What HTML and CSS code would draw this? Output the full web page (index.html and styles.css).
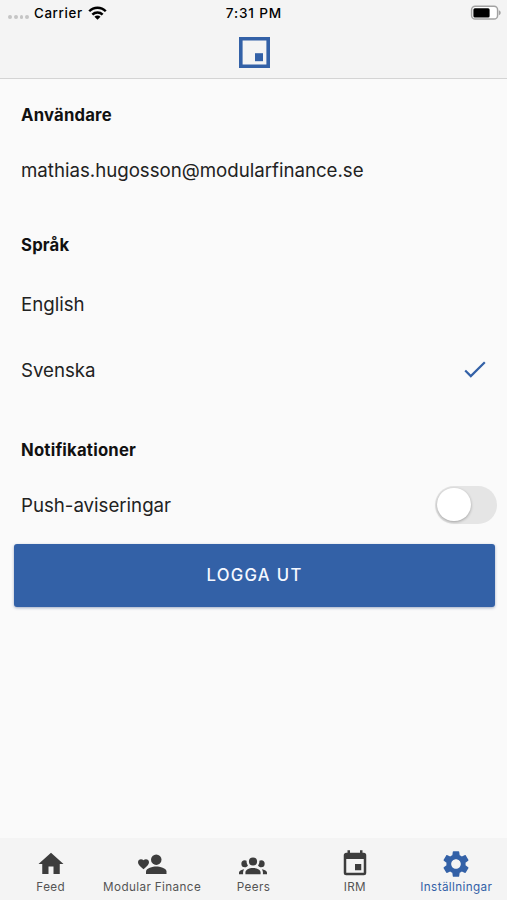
FILE: index.html
```html
<!DOCTYPE html>
<html lang="sv">
<head>
<meta charset="utf-8">
<title>Inställningar</title>
<link rel="stylesheet" href="styles.css">
</head>
<body>
<div class="app">
  <header class="header">
    <div class="status">
      <div class="status-left">
        <span class="dots"><i></i><i></i><i></i><i></i></span>
        <span class="carrier">Carrier</span>
        <svg class="wifi" viewBox="0 0 20 15"><g fill="none" stroke="#000" stroke-width="2.6"><path d="M1.3 5.4C6.1.5 13.9.5 18.7 5.4"/><path d="M4.6 8.9c3-3 7.8-3 10.8 0"/></g><path d="M6.800 11.100c1.800-1.700 4.600-1.700 6.400 0L10 14.400z"/></svg>
      </div>
      <span class="time">7:31 PM</span>
      <div class="status-right">
        <svg class="battery" viewBox="0 0 31 16"><rect x="1.600" y="1.300" width="26" height="12.800" rx="3.600" fill="#fff" stroke="#a2a2a2" stroke-width="1.500"/><rect x="3.400" y="3.200" width="16.200" height="9.200" rx="1.500"/><path d="M28.900 5.200c2.400 1 2.400 4 0 5z" fill="#a2a2a2"/></svg>
      </div>
    </div>
    <svg class="logo" viewBox="0 0 31 31" fill="#3361a7"><path fill-rule="evenodd" d="M0 0h31v31H0zM3.600 3.600v23.800h23.800V3.600z"/><path d="M16 16.200h8v8h-8z"/></svg>
  </header>
  <main class="content">
    <h2 class="heading">Användare</h2>
    <div class="row row-user"><span class="email">mathias.hugosson@modularfinance.se</span></div>
    <h2 class="heading heading-lang">Språk</h2>
    <div class="row row-lang"><span>English</span></div>
    <div class="row row-lang"><span>Svenska</span>
      <svg class="check" viewBox="0 0 22 17"><path d="M1.200 9.500l5.600 5.600L20.800 1.200" fill="none" stroke="#3361a7" stroke-width="2.200"/></svg>
    </div>
    <h2 class="heading heading-notif">Notifikationer</h2>
    <div class="row row-push"><span>Push-aviseringar</span><span class="toggle"><span class="knob"></span></span></div>
    <button class="logout"><span>LOGGA UT</span></button>
  </main>
  <nav class="tabs">
    <a class="tab"><svg viewBox="0 0 24 24"><path d="M10 20v-6h4v6h5v-8h3L12 3 2 12h3v8z"/></svg><span>Feed</span></a>
    <a class="tab"><svg viewBox="0 0 24 24"><circle cx="15.400" cy="8.500" r="4.200"/><path d="M7.200 20v-2.100c0-2.800 5.400-4 8.200-4s8.200 1.200 8.200 4V20z"/><path d="M5.200 16.200l-.7-.6C2.200 13.500.8 12.300.8 10.500c0-1.400 1.100-2.400 2.400-2.400.8 0 1.500.3 2 .9.500-.6 1.200-.9 2-.9 1.300 0 2.400 1 2.400 2.400 0 1.800-1.400 3-3.700 5.100z"/></svg><span>Modular Finance</span></a>
    <a class="tab"><svg class="peers" viewBox="0 0 24 24"><path d="M12 5.500A3.500 3.500 0 0 1 15.500 9a3.500 3.500 0 0 1-3.500 3.500A3.500 3.500 0 0 1 8.500 9 3.500 3.500 0 0 1 12 5.500M5 8c.56 0 1.080.15 1.530.42-.15 1.430.27 2.850 1.130 3.960C7.160 13.340 6.160 14 5 14a3 3 0 0 1-3-3 3 3 0 0 1 3-3m14 0a3 3 0 0 1 3 3 3 3 0 0 1-3 3c-1.160 0-2.160-.66-2.660-1.620.86-1.110 1.280-2.530 1.130-3.960C17.920 8.150 18.440 8 19 8M5.500 18.250c0-2.070 2.910-3.750 6.500-3.750s6.500 1.680 6.500 3.750V20h-13v-1.750M0 20v-1.500c0-1.390 1.890-2.560 4.450-2.900-.59.68-.95 1.620-.95 2.650V20H0m24 0h-3.500v-1.750c0-1.030-.36-1.970-.95-2.650 2.560.34 4.450 1.510 4.450 2.900V20z"/></svg><span>Peers</span></a>
    <a class="tab"><svg viewBox="0 0 24 24"><path d="M19 19H5V8h14m-3-7v2H8V1H6v2H5c-1.110 0-2 .89-2 2v14a2 2 0 0 0 2 2h14a2 2 0 0 0 2-2V5a2 2 0 0 0-2-2h-1V1h-2m1 11h-5v5h5v-5z"/></svg><span>IRM</span></a>
    <a class="tab active"><svg class="gear" viewBox="0 0 24 24"><path d="M19.140 12.940c.04-.3.06-.61.06-.94 0-.32-.02-.64-.07-.94l2.030-1.580c.18-.14.23-.41.12-.61l-1.920-3.320c-.12-.22-.37-.29-.59-.22l-2.390.96c-.5-.38-1.030-.7-1.620-.94l-.36-2.540c-.04-.24-.24-.41-.48-.41h-3.840c-.24 0-.43.17-.47.41l-.36 2.540c-.59.24-1.130.57-1.620.94l-2.390-.96c-.22-.08-.47 0-.59.22L2.740 8.870c-.12.21-.08.47.12.61l2.030 1.580c-.05.3-.09.63-.09.94s.02.64.07.94l-2.030 1.580c-.18.14-.23.41-.12.61l1.920 3.320c.12.22.37.29.59.22l2.390-.96c.5.38 1.030.7 1.620.94l.36 2.540c.05.24.24.41.48.41h3.840c.24 0 .44-.17.47-.41l.36-2.540c.59-.24 1.130-.56 1.620-.94l2.390.96c.22.08.47 0 .59-.22l1.920-3.320c.12-.22.07-.47-.12-.61l-2.010-1.580zM12 15.600c-1.980 0-3.600-1.620-3.600-3.600s1.620-3.600 3.600-3.600 3.600 1.620 3.600 3.600-1.620 3.600-3.600 3.600z"/></svg><span>Inställningar</span></a>
  </nav>
</div>
</body>
</html>
```
FILE: styles.css
```css
* { box-sizing: border-box; }
body { margin: 0; font-family: Inter, "Liberation Sans", sans-serif; background: #fafafa; color: #111; }
.app { width: 507px; height: 900px; display: flex; flex-direction: column; }
.header { height: 79px; flex: none; background: #f4f4f4; border-bottom: 1px solid #d4d4d4; display: flex; flex-direction: column; align-items: center; }
.status { width: 100%; height: 26px; display: grid; grid-template-columns: 1fr auto 1fr; align-items: center; font-size: 13.3px; font-weight: 500; color: #000; }
.status-left { display: flex; align-items: center; padding-left: 8px; }
.dots { display: flex; gap: 2px; width: 26px; padding-top: 8px; }
.dots i { width: 3.8px; height: 3.8px; border-radius: 50%; background: #c5c5c5; }
.carrier { letter-spacing: .65px; }
.time { font-size: 13.6px; letter-spacing: .85px; margin-right: -.85px; }
.wifi { width: 19px; height: 14.5px; margin-left: 5px; }
.status-right { display: flex; justify-content: flex-end; padding-right: 6px; }
.battery { width: 31px; height: 16px; }
.logo { width: 31px; height: 31px; margin: 10.5px 0 0 1px; }
.content { flex: 1; padding: 24px 10px 0 13px; }
.heading { margin: 0 0 0 8px; height: 24px; line-height: 24px; font-size: 16.7px; font-weight: 700; letter-spacing: .2px; }
.row { display: flex; align-items: center; justify-content: space-between; padding-left: 8px; font-size: 18.7px; letter-spacing: -.02px; color: #222; }
.row-user { height: 40px; margin-top: 23px; }
.heading-lang { margin-top: 43px; }
.row-lang { height: 66px; padding-right: 11px; }
.heading-lang + .row-lang { margin-top: 14px; }
.check { width: 22px; height: 17px; margin-top: -1px; }
.heading-notif { margin-top: 35px; }
.row-push { height: 38px; margin-top: 24px; }
.toggle { width: 62px; height: 38px; border-radius: 19px; background: #e5e5e5; padding: 0 2px 1px; display: flex; align-items: center; }
.knob { width: 33.5px; height: 33.5px; border-radius: 50%; background: #fff; box-shadow: 0 1px 3px rgba(0,0,0,.3); }
.logout { display: block; width: 481px; height: 63px; margin: 20px 0 0 .5px; padding: 0 0 1px 1px; border: 0; border-radius: 3px; background: #3361a7; color: #f5f8ff; font: 500 16.7px Inter, sans-serif; letter-spacing: 1.3px; box-shadow: 0 1px 3px rgba(30,60,120,.4); }
.tabs { height: 62px; flex: none; background: #f4f4f4; display: grid; grid-template-columns: repeat(5, 1fr); }
.tab { display: flex; flex-direction: column; align-items: center; padding-top: 11px; font-size: 11.7px; line-height: 16px; letter-spacing: .38px; color: #555; white-space: nowrap; }
.tab svg { width: 30px; height: 30px; fill: #3d3d3d; }
.tab svg.peers { width: 28px; height: 28px; margin: 2px 0 0; }
.tab svg.gear { width: 32px; height: 32px; margin: -1px 0; fill: #3361a7; }
.active { color: #3361a7; }
```
